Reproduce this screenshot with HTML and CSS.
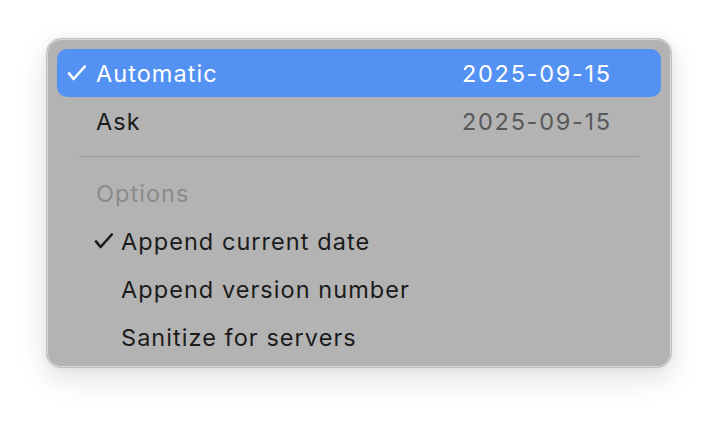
FILE: index.html
```html
<!DOCTYPE html>
<html>
<head>
<meta charset="utf-8">
<link rel="stylesheet" href="styles.css">
</head>
<body>
<div class="menu">
  <div class="row selected">
    <span class="check"><svg viewBox="0 0 20 16" width="20" height="16"><path d="M2 8.4 L6.6 14 L17.8 1.5" fill="none" stroke="currentColor" stroke-width="2.6" stroke-linecap="round" stroke-linejoin="round"/></svg></span>
    <span class="label">Automatic</span>
    <span class="date">2025-09-15</span>
  </div>
  <div class="row">
    <span class="check"></span>
    <span class="label">Ask</span>
    <span class="date dim">2025-09-15</span>
  </div>
  <div class="sep"></div>
  <div class="row header">
    <span class="check"></span>
    <span class="label">Options</span>
  </div>
  <div class="row sub">
    <span class="check"><svg viewBox="0 0 20 16" width="20" height="16"><path d="M2 8.4 L6.6 14 L17.8 1.5" fill="none" stroke="currentColor" stroke-width="2.6" stroke-linecap="round" stroke-linejoin="round"/></svg></span>
    <span class="label">Append current date</span>
  </div>
  <div class="row sub">
    <span class="check"></span>
    <span class="label">Append version number</span>
  </div>
  <div class="row sub">
    <span class="check"></span>
    <span class="label">Sanitize for servers</span>
  </div>
</div>
</body>
</html>
```
FILE: styles.css
```css
html, body {
  margin: 0;
  padding: 0;
  background: #ffffff;
  height: 100%;
}
body {
  box-sizing: border-box;
  padding: 38px 0 0 46px;
  font-family: Inter, "Noto Sans", "Liberation Sans", sans-serif;
}
.menu {
  box-sizing: border-box;
  width: 626px;
  height: 330px;
  padding: 10px 10px 8px 10px;
  background: #b3b3b3;
  border-radius: 15px;
  border: 1px solid #c2c2c2;
  box-shadow: inset 0 0 0 1px #d6d6d6, 0 10px 28px rgba(0,0,0,0.13), 0 0 6px rgba(0,0,0,0.05);
}
.row {
  display: flex;
  align-items: center;
  height: 48px;
  padding: 0 51px 0 10px;
  border-radius: 10px;
  font-size: 23.5px;
  font-weight: 400;
  color: #1b1b1b;
  letter-spacing: 1.05px;
}
.row.selected {
  background: #5391f2;
  color: #ffffff;
}
.check {
  width: 29px;
  flex: none;
  display: flex;
  align-items: center;
}
.check svg {
  display: block;
}
.label {
  flex: 1;
}
.date {
  color: #ffffff;
  letter-spacing: 1.7px;
  margin-right: -1.7px;
}
.date.dim {
  color: #595959;
}
.sep {
  height: 1px;
  margin: 11px 22px 12px 22px;
  background: #979797;
}
.row.header {
  color: #8b8b8b;
}
.row.sub .check {
  width: 28px;
  margin-left: 26px;
}
.row.sub .check svg {
  margin-left: 1px;
}
```
